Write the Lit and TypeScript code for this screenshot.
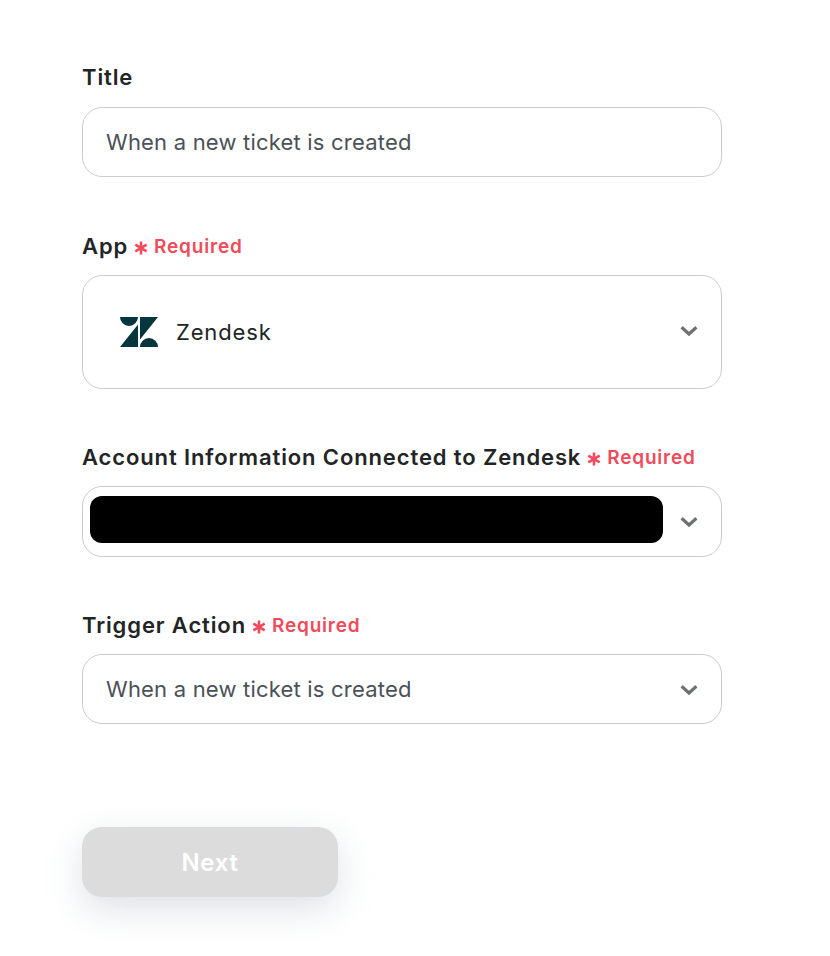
import { LitElement, html, css, svg } from "lit";
import { customElement } from "lit/decorators.js";

const chevron = html`<svg class="chev" width="18" height="12" viewBox="0 0 18 12"><path d="M1.600 2.200 9 9 16.400 2.200" fill="none" stroke="#6f7275" stroke-width="3.200"/></svg>`;
const req = html`<span class="req"><svg class="star" width="14" height="14" viewBox="0 0 14 14"><g stroke="#f04b5a" stroke-width="2.600">${svg`<path d="M7 .4V13.600M1.300 3.700 12.700 10.300M12.700 3.700 1.300 10.300"/>`}</g></svg><span>Required</span></span>`;

@customElement("app-root")
export class AppRoot extends LitElement {
  static styles = css`
    :host { display: block; width: 830px; height: 956px; background: #fff; font-family: Inter, "Liberation Sans", sans-serif; color: #222426; overflow: hidden; }
    .form { display: flex; flex-direction: column; width: 640px; padding: 64px 0 0 82px; }
    .label { display: flex; align-items: center; height: 26px; font-size: 22px; font-weight: 600; letter-spacing: 0.88px; gap: 6px; margin-bottom: 17px; }
    .label.required { margin-bottom: 16px; }
    .req { display: inline-flex; align-items: center; gap: 6px; font-size: 19px; font-weight: 600; color: #f04b5a; letter-spacing: 0.8px; padding-top: 1px; }
    .star { margin-top: 3px; }
    .field { box-sizing: border-box; display: flex; align-items: center; width: 640px; height: 70px; border: 1px solid #c9cccf; border-radius: 20px; padding: 0 23px; font-size: 22px; color: #4b5157; letter-spacing: 0.2px; background: #fff; margin-bottom: 56px; }
    .grow { flex: 1; }
    .chev { flex: none; margin-top: 1px; }
    .app { height: 114px; padding: 0 23px 0 37px; color: #222426; gap: 18px; letter-spacing: 0.85px; margin-bottom: 55px; }
    .app .chev { margin-top: 0; margin-bottom: 2px; }
    .logo { flex: none; }
    .account { height: 71px; padding: 0 23px 0 7px; gap: 17px; margin-bottom: 55px; }
    .mask { flex: 1; height: 47px; margin-bottom: 4px; background: #000; border-radius: 12px; }
    .trigger { margin-bottom: 103px; }
    .next { box-sizing: border-box; display: flex; align-items: center; justify-content: center; width: 256px; height: 70px; border-radius: 20px; background: #dcdcdc; color: #fff; font-size: 24px; font-weight: 600; letter-spacing: 0.7px; box-shadow: 0 12px 36px rgba(150, 165, 175, 0.32); }
  `;

  render() {
    return html`<div class="form">
      <div class="label">Title</div>
      <div class="field"><span class="grow">When a new ticket is created</span></div>
      <div class="label required">App ${req}</div>
      <div class="field app">
        <svg class="logo" width="38" height="30" viewBox="0 0 38 30"><path fill="#03363d" d="M18 0A9 9 0 0 1 0 0ZM18 7.500V30H0ZM20 22.500V0H38ZM20 30A9 9 0 0 1 38 30Z"/></svg>
        <span class="grow">Zendesk</span>${chevron}
      </div>
      <div class="label required">Account Information Connected to Zendesk ${req}</div>
      <div class="field account"><div class="mask"></div>${chevron}</div>
      <div class="label required">Trigger Action ${req}</div>
      <div class="field trigger"><span class="grow">When a new ticket is created</span>${chevron}</div>
      <div class="next">Next</div>
    </div>`;
  }
}
